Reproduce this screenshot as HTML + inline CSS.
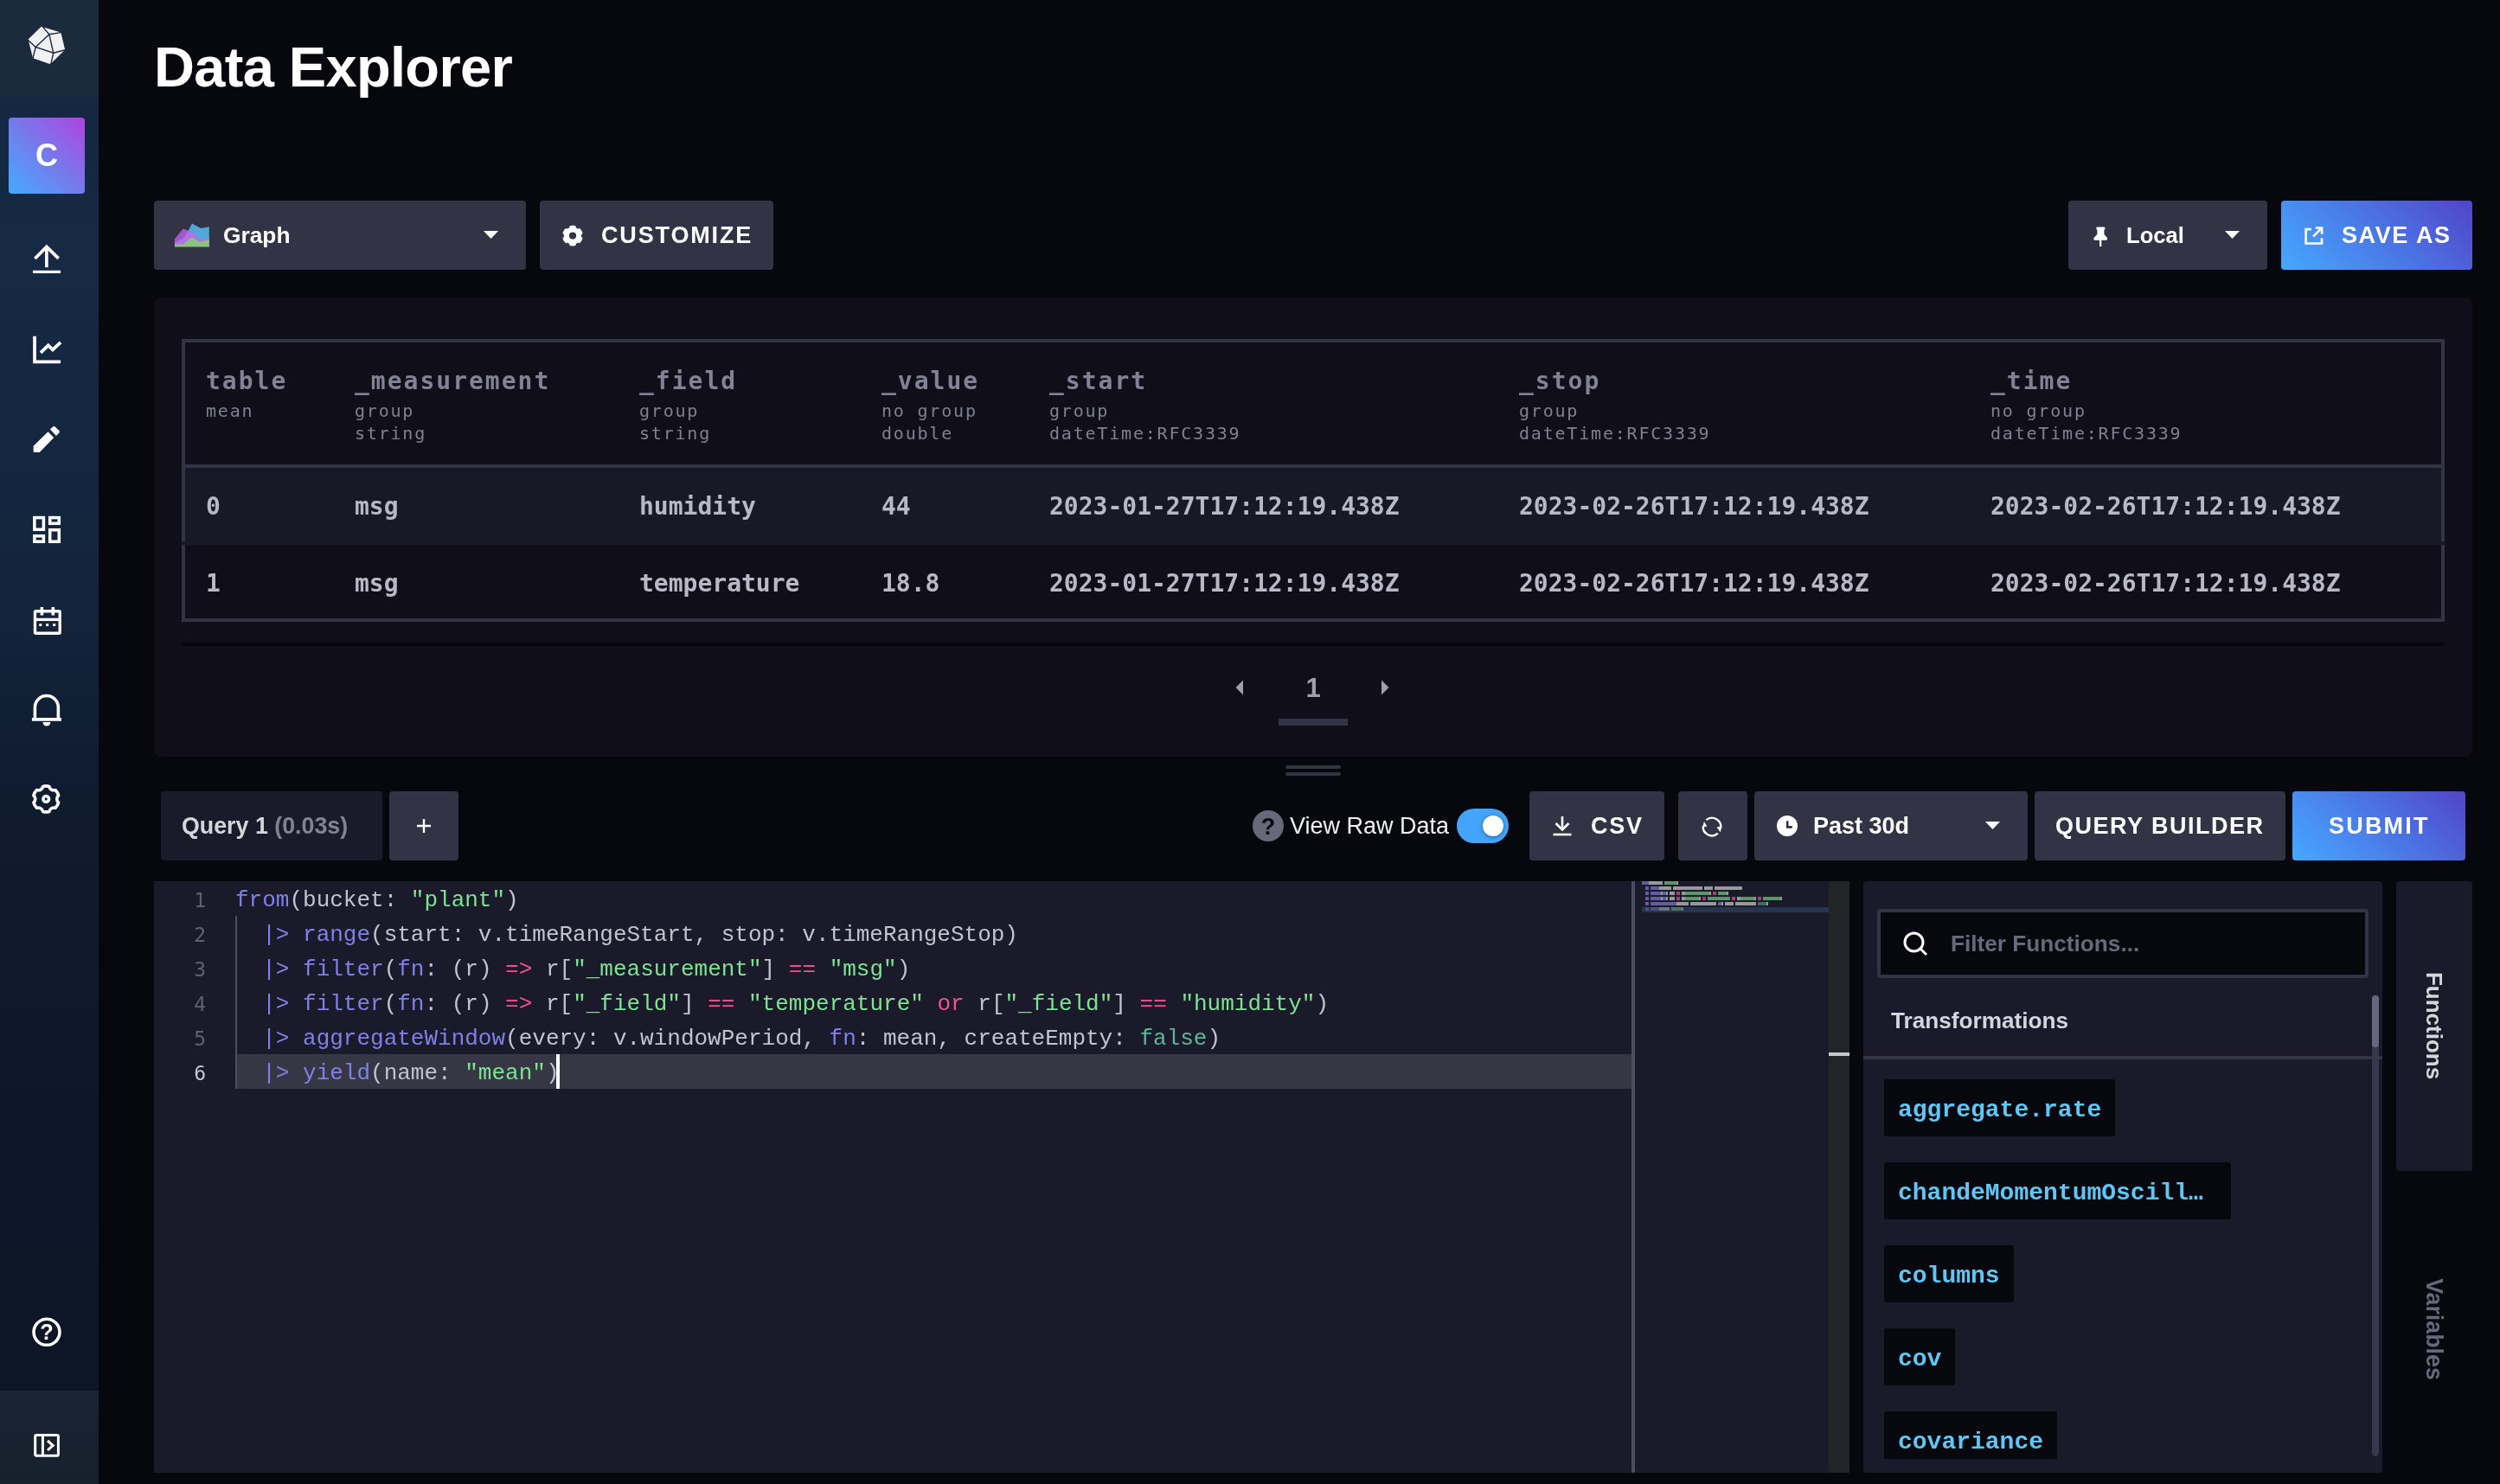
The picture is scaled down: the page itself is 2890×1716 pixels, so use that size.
<!DOCTYPE html>
<html lang="en">
<head>
<meta charset="utf-8">
<title>Data Explorer</title>
<style>
*{box-sizing:border-box;margin:0;padding:0}
html,body{width:2890px;height:1716px;overflow:hidden;background:#07070e}
body{position:relative;will-change:transform;font-family:"Liberation Sans",sans-serif;color:#fff}
.abs{position:absolute}
/* sidebar */
#nav{position:absolute;left:0;top:0;width:114px;height:1716px;background:linear-gradient(180deg,rgb(20,37,62) 0.00%,rgb(22,42,69) 17.48%,rgb(20,38,64) 29.14%,rgb(20,36,60) 40.79%,rgb(17,31,52) 47.79%,rgb(15,27,47) 53.85%,rgb(14,24,42) 69.93%,rgb(13,22,39) 89.74%,rgb(12,21,38) 100.00%)}
#nav .hd{position:absolute;left:0;top:0;width:114px;height:112px;background:#1c2a3e}
#nav .ft{position:absolute;left:0;top:1608px;width:114px;height:108px;background:linear-gradient(180deg,#1a2432,#17202d)}
#nav .av{position:absolute;left:10px;top:136px;width:88px;height:88px;border-radius:4px;background:linear-gradient(45deg,#45aaff 0%,#6f80ec 45%,#b044e0 100%);font-weight:bold;font-size:36px;line-height:88px;text-align:center;color:#fff}
#nav svg{position:absolute}
/* title */
#title{position:absolute;left:178px;top:40px;font-size:65px;line-height:76px;font-weight:bold;color:#fff;white-space:nowrap;letter-spacing:-0.65px}
/* buttons */
.btn{position:absolute;height:80px;border-radius:4px;background:#333346;color:#fff;font-weight:bold;font-size:27px;line-height:80px;white-space:nowrap}
.btn.pri{background:linear-gradient(45deg,#45a9ff 0%,#4a7de8 45%,#5244c9 100%)}
.btn svg{position:absolute}
.btn .t{position:absolute;top:0}
.caps{letter-spacing:2.2px}
/* panel */
#panel{position:absolute;left:178px;top:344px;width:2680px;height:531px;border-radius:8px;background:#0f0e19}
#tbl{position:absolute;left:32px;top:48px;width:2616px;height:327px;border:4px solid #333346}
#tbl .hrow{position:absolute;left:0;top:0;width:2608px;height:145px;border-bottom:4px solid #333346}
#tbl .r0{position:absolute;left:-4px;top:145px;width:2616px;height:89px;background:#191827}
#tbl .r0:before,#tbl .r0:after{content:"";position:absolute;top:0;width:4px;height:85px;background:#333346}
#tbl .r0:before{left:0}#tbl .r0:after{right:0}
.dmono{font-family:"DejaVu Sans Mono","Liberation Mono",monospace}
.mono{font-family:"Liberation Mono","DejaVu Sans Mono",monospace}
.th{position:absolute;top:28px;font-weight:bold;font-size:28px;line-height:34px;letter-spacing:2px;color:#828294;white-space:nowrap}
.th i{display:block;font-style:normal;font-weight:normal;font-size:20px;line-height:26px;letter-spacing:1.8px;color:#80808f}
.th i.f{margin-top:4px}
.td{position:absolute;font-weight:bold;font-size:28px;line-height:34px;color:#b9b9c5;white-space:nowrap}

#ed{position:absolute;left:178px;top:1019px;width:1960px;height:684px;background:#1a1a2a;overflow:hidden}
#ed .ln{position:absolute;left:0;margin-top:2px;width:60px;text-align:right;font-family:"DejaVu Sans Mono","Liberation Mono",monospace;font-size:23px;line-height:40px;color:#5f6070;height:40px}
#ed .cl{position:absolute;left:94px;margin-top:2px;height:40px;font-family:"Liberation Mono","DejaVu Sans Mono",monospace;font-size:26px;line-height:40px;color:#c3c3cf;white-space:pre}
#ed .k{color:#8080e8}#ed .s{color:#7ce490}#ed .o{color:#f6518d}#ed .b{color:#5cb896}
#fn{position:absolute;left:2154px;top:1019px;width:600px;height:684px;border-radius:4px;background:#1a1a2a;overflow:hidden}
#fn .pill{position:absolute;left:24px;height:66px;border-radius:3px;background:#07070e;color:#5fc6f6;font-family:"Liberation Mono","DejaVu Sans Mono",monospace;font-weight:bold;font-size:28px;line-height:71px;padding:0 16px;white-space:nowrap;overflow:hidden}
</style>
</head>
<body>
<div id="nav">
  <div class="hd"></div>
  <div class="av">C</div>
  <div class="ft"></div>
<svg style="left:14px;top:10px" width="80" height="80" viewBox="0 0 1484 1484"><polygon points="345,660 625,385 1045,512 1135,880 852,1160 808,1187 445,1062" fill="#f1f1f3"/><g stroke="#1c2a3e" stroke-width="26" stroke-linecap="round" fill="none"><path d="M655 388 L795 550 L1045 512"/><path d="M795 550 L505 825 L885 950 Z"/><path d="M345 675 L505 825 L445 1062"/><path d="M885 950 L1135 885"/><path d="M885 950 L835 1175"/></g></svg>
<svg style="left:14px;top:260px" width="80" height="80" viewBox="0 0 1484 1484"><g stroke="#fff" stroke-width="68" fill="none"><path d="M490 722 L740 470 L995 722"/><path d="M740 480 V912"/><path d="M447 1010 H1040" stroke-width="62"/></g></svg>
<svg style="left:14px;top:364px" width="80" height="80" viewBox="0 0 1484 1484"><g stroke="#fff" stroke-width="70" fill="none"><path d="M483 458 V1010 H1040"/><path d="M612 812 L775 657 L870 748 L1040 592" stroke-linecap="butt"/></g></svg>
<svg style="left:14px;top:468px" width="80" height="80" viewBox="0 0 1484 1484"><g fill="#fff"><path d="M458 885 L770 578 L895 705 L590 1022 H458 Z"/><path d="M815 530 L873 472 Q897 450 921 472 L1008 558 Q1030 582 1008 604 L945 668 Z"/></g></svg>
<svg style="left:14px;top:572px" width="80" height="80" viewBox="0 0 1484 1484"><g stroke="#fff" stroke-width="66" fill="none"><rect x="480" y="493" width="195" height="254"/><rect x="811" y="493" width="196" height="124"/><rect x="480" y="886" width="195" height="121"/><rect x="811" y="756" width="196" height="251"/></g></svg>
<svg style="left:14px;top:676px" width="80" height="80" viewBox="0 0 1484 1484"><g stroke="#fff" stroke-width="62" fill="none"><rect x="491" y="571" width="533" height="473" rx="18"/><path d="M491 750 H1024"/><path d="M638 480 V660 M878 480 V660" stroke-width="66"/></g><g fill="#fff"><rect x="580" y="838" width="56" height="54"/><rect x="727" y="838" width="56" height="54"/><rect x="875" y="838" width="57" height="54"/></g></svg>
<svg style="left:14px;top:780px" width="80" height="80" viewBox="0 0 1484 1484"><g stroke="#fff" stroke-width="66" fill="none"><path d="M490 960 V705 A250 250 0 0 1 990 705 V960"/><path d="M425 963 H1058" stroke-width="72"/></g><path d="M658 1022 H822 A82 84 0 0 1 658 1022 Z" fill="#fff"/></svg>
<svg style="left:14px;top:884px" width="80" height="80" viewBox="0 0 1484 1484"><g stroke="#fff" stroke-width="66" fill="none" stroke-linejoin="round"><path d="M660.7 470.3 A278 278 0 0 1 795.3 470.3 A100 100 0 0 0 928.0 546.9 A278 278 0 0 1 995.2 663.4 A100 100 0 0 0 995.2 816.6 A278 278 0 0 1 928.0 933.1 A100 100 0 0 0 795.3 1009.7 A278 278 0 0 1 660.7 1009.7 A100 100 0 0 0 528.0 933.1 A278 278 0 0 1 460.8 816.6 A100 100 0 0 0 460.8 663.4 A278 278 0 0 1 528.0 546.9 A100 100 0 0 0 660.7 470.3 Z"/><circle cx="728" cy="740" r="62"/></g></svg>
<svg style="left:14px;top:1500px" width="80" height="80" viewBox="0 0 1484 1484"><circle cx="742" cy="748" r="278" stroke="#fff" stroke-width="66" fill="none"/><text x="742" y="912" text-anchor="middle" font-family="Liberation Sans,sans-serif" font-weight="bold" font-size="470" fill="#fff">?</text></svg>
<svg style="left:36px;top:1654px" width="36" height="34" viewBox="36 1654 36 34"><g stroke="#fff" stroke-width="3" fill="none"><rect x="40.7" y="1659.4" width="26.7" height="23.8" rx="1.5"/><path d="M49.4 1659.4 V1683.2"/><path d="M55 1666 L61.2 1671.4 L55 1677"/></g></svg>
</div>
<div id="title">Data Explorer</div>
<div class="btn" style="left:178px;top:232px;width:430px"><svg style="left:24px;top:26px" width="41" height="28" viewBox="0 0 41 28"><path d="M15.2 9.4 L20 0.4 L30.2 6 L39.8 4.3 V27 H15.2 Z" fill="#4fa8d8"/><path d="M0 18.4 L9.8 6.7 L15.6 9.1 L20.6 10.8 L29.6 19 L39.8 17.2 V27 H0 Z" fill="#b072e8"/><path d="M0 18.4 L9.8 6.7 L15.6 9.1 L9.8 17.8 L0 22.6 Z" fill="#a558cc"/><path d="M0 24.4 H9.8 L19.4 16.6 L29.6 21.7 L39.8 19 V27.4 H0 Z" fill="#8bc27d"/></svg><span class="t" style="left:80px;font-size:26.3px">Graph</span><svg style="left:381px;top:35.2px" width="17" height="9" viewBox="0 0 17 9"><path d="M0 0 H17 L8.5 9 Z" fill="#fff"/></svg></div>
<div class="btn" style="left:624px;top:232px;width:270px"><svg style="left:24px;top:26.7px" width="28" height="28" viewBox="-14 -13.6 28 28"><path d="M-3.20 -11.15 A11.6 11.6 0 0 1 3.20 -11.15 A3.2 3.2 0 0 0 8.06 -8.34 A11.6 11.6 0 0 1 11.26 -2.81 A3.2 3.2 0 0 0 11.26 2.81 A11.6 11.6 0 0 1 8.06 8.34 A3.2 3.2 0 0 0 3.20 11.15 A11.6 11.6 0 0 1 -3.20 11.15 A3.2 3.2 0 0 0 -8.06 8.34 A11.6 11.6 0 0 1 -11.26 2.81 A3.2 3.2 0 0 0 -11.26 -2.81 A11.6 11.6 0 0 1 -8.06 -8.34 A3.2 3.2 0 0 0 -3.20 -11.15 Z" fill="#fff" stroke="#fff" stroke-width="0.6" stroke-linejoin="round"/><circle cx="0" cy="0" r="4.1" fill="#333346"/></svg><span class="t caps" style="left:71px;letter-spacing:1.85px">CUSTOMIZE</span></div>
<div class="btn" style="left:2391px;top:232px;width:230px"><svg style="left:29px;top:30px" width="17" height="24" viewBox="0 0 17 24"><path d="M3.4 1.6 Q3.4 0.4 4.6 0.4 H12.2 Q13.4 0.4 13.4 1.6 V3.4 H12.4 V9 L15.9 13 Q16.6 15.6 15 15.7 H9.3 V23 H7 V15.7 H1.4 Q-0.2 15.6 0.5 13 L4.4 9 V3.4 H3.4 Z" fill="#fff"/></svg><span class="t" style="left:67px;font-size:25.6px">Local</span><svg style="left:180.5px;top:35.2px" width="17" height="9" viewBox="0 0 17 9"><path d="M0 0 H17 L8.5 9 Z" fill="#fff"/></svg></div>
<div class="btn pri" style="left:2637px;top:232px;width:221px"><svg style="left:26px;top:28px" width="24" height="24" viewBox="26 28 24 24" fill="none" stroke="#fff" stroke-width="2.6"><path d="M34.8 33.1 H28.6 V49.5 H47 V43.3"/><path d="M39.8 31.5 H47.1 V38.8"/><path d="M47 31.6 L37.2 41.4"/></svg><span class="t caps" style="left:70px;letter-spacing:1.6px">SAVE AS</span></div>
<div id="panel">
<div id="tbl" class="dmono">
<div class="hrow"></div>
<div class="r0"></div>
<div class="th" style="left:24px">table<i class="f">mean</i></div>
<div class="th" style="left:196px">_measurement<i class="f">group</i><i>string</i></div>
<div class="th" style="left:525px">_field<i class="f">group</i><i>string</i></div>
<div class="th" style="left:805px">_value<i class="f">no group</i><i>double</i></div>
<div class="th" style="left:999px">_start<i class="f">group</i><i>dateTime:RFC3339</i></div>
<div class="th" style="left:1542px">_stop<i class="f">group</i><i>dateTime:RFC3339</i></div>
<div class="th" style="left:2087px">_time<i class="f">no group</i><i>dateTime:RFC3339</i></div>
<div class="td" style="left:24px;top:173px">0</div>
<div class="td" style="left:196px;top:173px">msg</div>
<div class="td" style="left:525px;top:173px">humidity</div>
<div class="td" style="left:805px;top:173px">44</div>
<div class="td" style="left:999px;top:173px">2023-01-27T17:12:19.438Z</div>
<div class="td" style="left:1542px;top:173px">2023-02-26T17:12:19.438Z</div>
<div class="td" style="left:2087px;top:173px">2023-02-26T17:12:19.438Z</div>
<div class="td" style="left:24px;top:262px">1</div>
<div class="td" style="left:196px;top:262px">msg</div>
<div class="td" style="left:525px;top:262px">temperature</div>
<div class="td" style="left:805px;top:262px">18.8</div>
<div class="td" style="left:999px;top:262px">2023-01-27T17:12:19.438Z</div>
<div class="td" style="left:1542px;top:262px">2023-02-26T17:12:19.438Z</div>
<div class="td" style="left:2087px;top:262px">2023-02-26T17:12:19.438Z</div>
</div>
<div class="abs" style="left:32px;top:399px;width:2616px;height:4px;background:#07070e"></div>
<svg class="abs" style="left:1250px;top:442px" width="10" height="18" viewBox="0 0 10 18"><path d="M9 0.5 L9 17.5 L0.5 9 Z" fill="#9e9ead"/></svg>
<svg class="abs" style="left:1418px;top:442px" width="10" height="18" viewBox="0 0 10 18"><path d="M1 0.5 L1 17.5 L9.5 9 Z" fill="#9e9ead"/></svg>
<div class="abs" style="left:1300px;top:432px;width:80px;height:40px;text-align:center;font-weight:bold;font-size:31px;line-height:40px;color:#9e9ead">1</div>
<div class="abs" style="left:1300px;top:487px;width:80px;height:8px;background:#333346"></div>
</div>
<div class="abs" style="left:1486px;top:885px;width:64px;height:4px;border-radius:2px;background:#333346"></div>
<div class="abs" style="left:1486px;top:893px;width:64px;height:4px;border-radius:2px;background:#333346"></div>
<div class="btn" style="left:186px;top:915px;width:256px;background:#1a1a2a;font-size:26.8px"><span class="t" style="left:24px;color:#d5d5dd">Query 1 <span style="color:#828294">(0.03s)</span></span></div>
<div class="btn" style="left:450px;top:915px;width:80px"><svg style="left:31px;top:31px" width="18" height="18" viewBox="0 0 18 18"><path d="M9 1 V17 M1 9 H17" stroke="#fff" stroke-width="2.4"/></svg></div>
<svg class="abs" style="left:1447px;top:936px" width="38" height="38" viewBox="0 0 38 38"><circle cx="19" cy="19" r="18" fill="#68687b"/><text x="19" y="28.5" text-anchor="middle" font-family="Liberation Sans,sans-serif" font-weight="bold" font-size="27" fill="#07070e">?</text></svg>
<div class="abs" style="left:1491px;top:935px;font-size:27px;line-height:40px;color:#f1f1f3;white-space:nowrap">View Raw Data</div>
<div class="abs" style="left:1684px;top:935px;width:60px;height:40px;border-radius:20px;background:#42a4fb"><div class="abs" style="left:30px;top:8px;width:24px;height:24px;border-radius:12px;background:#fff;box-shadow:0 1px 4px rgba(0,0,40,.45)"></div></div>
<div class="btn" style="left:1768px;top:915px;width:156px"><svg style="left:26px;top:28px" width="24" height="24" viewBox="0 0 24 24" fill="none" stroke="#fff" stroke-width="2.6"><path d="M12 1 V16"/><path d="M4.5 9 L12 16.5 L19.5 9"/><path d="M1.5 22 H22.5"/></svg><span class="t caps" style="left:71px;letter-spacing:1.7px">CSV</span></div>
<div class="btn" style="left:1940px;top:915px;width:80px"><svg style="left:24px;top:26px" width="30" height="30" viewBox="-15 -15 30 30"><g fill="none" stroke="#fff" stroke-width="2.3"><path d="M-6.6 -7.9 A10.3 10.3 0 0 1 10.2 1.2"/><path d="M6.9 7.7 A10.3 10.3 0 0 1 -10.2 -1.0"/></g><path d="M5.6 0.6 L11.6 -0.6 L9.6 6.3 Z M-11.0 0.7 L-5.6 -0.5 L-9.0 -6.0 Z" fill="#fff"/></svg></div>
<div class="btn" style="left:2028px;top:915px;width:316px"><svg style="left:26px;top:28px" width="24" height="24" viewBox="0 0 24 24"><circle cx="12" cy="12" r="12" fill="#fff"/><path d="M12.2 6.3 V13.4 H17.8" stroke="#333346" stroke-width="2.6" fill="none"/></svg><span class="t" style="left:68px">Past 30d</span><svg style="left:267px;top:35.2px" width="17" height="9" viewBox="0 0 17 9"><path d="M0 0 H17 L8.5 9 Z" fill="#fff"/></svg></div>
<div class="btn" style="left:2352px;top:915px;width:290px"><span class="t caps" style="left:24px;letter-spacing:1.5px">QUERY BUILDER</span></div>
<div class="btn pri" style="left:2650px;top:915px;width:200px"><span class="t caps" style="left:42px">SUBMIT</span></div>
<div id="ed">
<div class="abs" style="left:94px;top:200px;width:1614px;height:40px;background:#363644"></div>
<div class="abs" style="left:94px;top:40px;width:2px;height:200px;background:#4d4d60"></div>
<div class="ln" style="top:0px;color:#5f6070">1</div>
<div class="cl" style="top:0px"><span class="k">from</span>(bucket: <span class="s">"plant"</span>)</div>
<div class="ln" style="top:40px;color:#5f6070">2</div>
<div class="cl" style="top:40px">  <span class="k">|&gt; range</span>(start: v.timeRangeStart, stop: v.timeRangeStop)</div>
<div class="ln" style="top:80px;color:#5f6070">3</div>
<div class="cl" style="top:80px">  <span class="k">|&gt; filter</span>(<span class="k">fn</span>: (r) <span class="o">=&gt;</span> r[<span class="s">"_measurement"</span>] <span class="o">==</span> <span class="s">"msg"</span>)</div>
<div class="ln" style="top:120px;color:#5f6070">4</div>
<div class="cl" style="top:120px">  <span class="k">|&gt; filter</span>(<span class="k">fn</span>: (r) <span class="o">=&gt;</span> r[<span class="s">"_field"</span>] <span class="o">==</span> <span class="s">"temperature"</span> <span class="o">or</span> r[<span class="s">"_field"</span>] <span class="o">==</span> <span class="s">"humidity"</span>)</div>
<div class="ln" style="top:160px;color:#5f6070">5</div>
<div class="cl" style="top:160px">  <span class="k">|&gt; aggregateWindow</span>(every: v.windowPeriod, <span class="k">fn</span>: mean, createEmpty: <span class="b">false</span>)</div>
<div class="ln" style="top:200px;color:#c8c8d2">6</div>
<div class="cl" style="top:200px">  <span class="k">|&gt; yield</span>(name: <span class="s">"mean"</span>)</div>
<div class="abs" style="left:465px;top:200px;width:4px;height:40px;background:#fff"></div>
<div class="abs" style="left:1708px;top:0;width:4px;height:684px;background:#4d4d60"></div>
<div class="abs" style="left:1936px;top:0;width:24px;height:684px;background:#232428"></div>
<div class="abs" style="left:1936px;top:198px;width:24px;height:4px;background:#c8c8d0"></div>
<svg class="abs" style="left:1712px;top:0" width="224" height="40" viewBox="0 0 224 40" shape-rendering="crispEdges"><rect x="8" y="30" width="216" height="6" fill="#26344f"/><rect x="8" y="0" width="8" height="4" fill="#5e5ea0"/><rect x="16" y="0" width="16" height="4" fill="#98989e"/><rect x="34" y="0" width="14" height="4" fill="#5a9668"/><rect x="48" y="0" width="2" height="4" fill="#98989e"/><rect x="12" y="6" width="4" height="4" fill="#5e5ea0"/><rect x="18" y="6" width="10" height="4" fill="#5e5ea0"/><rect x="28" y="6" width="14" height="4" fill="#98989e"/><rect x="44" y="6" width="34" height="4" fill="#98989e"/><rect x="80" y="6" width="10" height="4" fill="#98989e"/><rect x="92" y="6" width="32" height="4" fill="#98989e"/><rect x="12" y="12" width="4" height="4" fill="#5e5ea0"/><rect x="18" y="12" width="12" height="4" fill="#5e5ea0"/><rect x="30" y="12" width="2" height="4" fill="#98989e"/><rect x="32" y="12" width="4" height="4" fill="#5e5ea0"/><rect x="36" y="12" width="2" height="4" fill="#98989e"/><rect x="40" y="12" width="6" height="4" fill="#98989e"/><rect x="48" y="12" width="4" height="4" fill="#a84070"/><rect x="54" y="12" width="4" height="4" fill="#98989e"/><rect x="58" y="12" width="28" height="4" fill="#5a9668"/><rect x="86" y="12" width="2" height="4" fill="#98989e"/><rect x="90" y="12" width="4" height="4" fill="#a84070"/><rect x="96" y="12" width="10" height="4" fill="#5a9668"/><rect x="106" y="12" width="2" height="4" fill="#98989e"/><rect x="12" y="18" width="4" height="4" fill="#5e5ea0"/><rect x="18" y="18" width="12" height="4" fill="#5e5ea0"/><rect x="30" y="18" width="2" height="4" fill="#98989e"/><rect x="32" y="18" width="4" height="4" fill="#5e5ea0"/><rect x="36" y="18" width="2" height="4" fill="#98989e"/><rect x="40" y="18" width="6" height="4" fill="#98989e"/><rect x="48" y="18" width="4" height="4" fill="#a84070"/><rect x="54" y="18" width="4" height="4" fill="#98989e"/><rect x="58" y="18" width="16" height="4" fill="#5a9668"/><rect x="74" y="18" width="2" height="4" fill="#98989e"/><rect x="78" y="18" width="4" height="4" fill="#a84070"/><rect x="84" y="18" width="26" height="4" fill="#5a9668"/><rect x="112" y="18" width="4" height="4" fill="#a84070"/><rect x="118" y="18" width="4" height="4" fill="#98989e"/><rect x="122" y="18" width="16" height="4" fill="#5a9668"/><rect x="138" y="18" width="2" height="4" fill="#98989e"/><rect x="142" y="18" width="4" height="4" fill="#a84070"/><rect x="148" y="18" width="20" height="4" fill="#5a9668"/><rect x="168" y="18" width="2" height="4" fill="#98989e"/><rect x="12" y="24" width="4" height="4" fill="#5e5ea0"/><rect x="18" y="24" width="30" height="4" fill="#5e5ea0"/><rect x="48" y="24" width="14" height="4" fill="#98989e"/><rect x="64" y="24" width="30" height="4" fill="#98989e"/><rect x="96" y="24" width="4" height="4" fill="#5e5ea0"/><rect x="100" y="24" width="2" height="4" fill="#98989e"/><rect x="104" y="24" width="10" height="4" fill="#98989e"/><rect x="116" y="24" width="24" height="4" fill="#98989e"/><rect x="142" y="24" width="10" height="4" fill="#3a6e64"/><rect x="152" y="24" width="2" height="4" fill="#98989e"/><rect x="12" y="30" width="4" height="4" fill="#5e5ea0" opacity="0.65"/><rect x="18" y="30" width="10" height="4" fill="#5e5ea0" opacity="0.65"/><rect x="28" y="30" width="12" height="4" fill="#98989e" opacity="0.65"/><rect x="42" y="30" width="12" height="4" fill="#5a9668" opacity="0.65"/><rect x="54" y="30" width="2" height="4" fill="#98989e" opacity="0.65"/></svg>
</div>
<div id="fn">
<div class="abs" style="left:16px;top:32px;width:568px;height:80px;border:4px solid #333346;border-radius:4px;background:#07070e"><svg class="abs" style="left:25px;top:21px" width="32" height="32" viewBox="0 0 32 32" fill="none" stroke="#fff" stroke-width="3"><circle cx="13.5" cy="13.5" r="10.5"/><path d="M21 21 L28 28"/></svg><div class="abs" style="left:81px;top:0;height:72px;line-height:72px;font-weight:bold;font-size:26.2px;color:#68687b;white-space:nowrap">Filter Functions...</div></div>
<div class="abs" style="left:32px;top:136px;height:50px;line-height:50px;font-weight:bold;font-size:26.2px;color:#d5d5dd;white-space:nowrap">Transformations</div>
<div class="abs" style="left:0;top:202px;width:600px;height:4px;background:#333346"></div>
<div class="abs" style="left:588px;top:132px;width:8px;height:533px;border-radius:4px;background:#38384a"></div>
<div class="abs" style="left:588px;top:132px;width:8px;height:60px;border-radius:4px;background:#68687b"></div>
<div class="abs" style="left:0;top:0;width:584px;height:668px;overflow:hidden">
<div class="pill" style="top:229px">aggregate.rate</div>
<div class="pill" style="top:325px;width:401px">chandeMomentumOscill…</div>
<div class="pill" style="top:421px">columns</div>
<div class="pill" style="top:517px">cov</div>
<div class="pill" style="top:613px">covariance</div>
</div>
</div>
<div class="abs" style="left:2770px;top:1019px;width:88px;height:335px;border-radius:4px;background:#1a1a2a"></div>
<div class="abs" style="left:2814px;top:1186px;width:0;height:0"><div style="position:absolute;left:-100px;top:-20px;width:200px;height:40px;line-height:40px;text-align:center;transform:rotate(90deg);font-weight:bold;font-size:26px;color:#d5d5dd;white-space:nowrap">Functions</div></div>
<div class="abs" style="left:2814px;top:1537px;width:0;height:0"><div style="position:absolute;left:-100px;top:-20px;width:200px;height:40px;line-height:40px;text-align:center;transform:rotate(90deg);font-weight:bold;font-size:26.8px;color:#68687b;white-space:nowrap">Variables</div></div>
</body>
</html>
